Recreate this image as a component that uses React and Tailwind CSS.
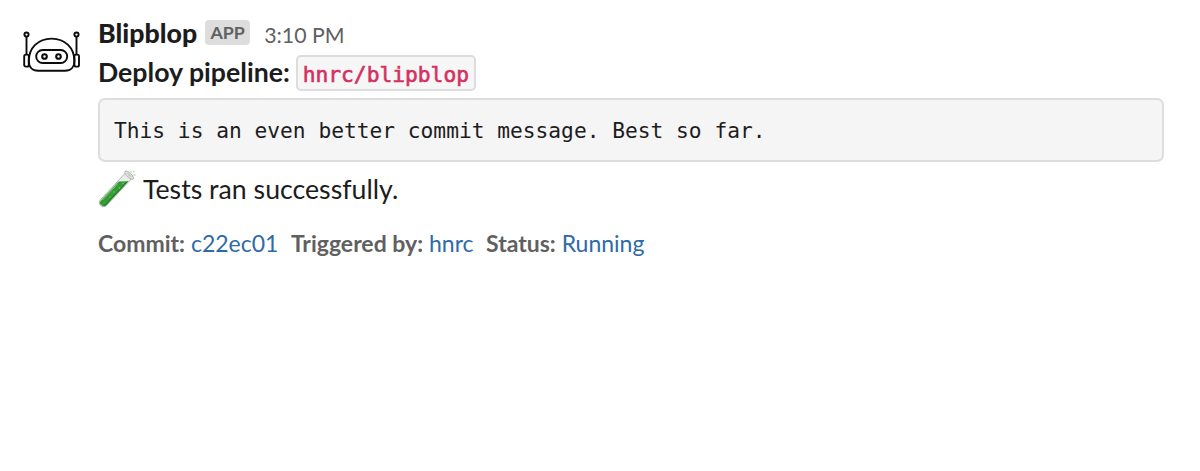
function RobotAvatar() {
  return (
    <svg className="h-16 w-16 shrink-0" viewBox="0 0 64 64" fill="none" stroke="#0c0c0c" strokeWidth="1.9">
      <circle cx="6.5" cy="14.6" r="2.1" />
      <circle cx="56.5" cy="14.6" r="2.1" />
      <path d="M6.5 16.7V34M56.5 16.7V34" />
      <rect x="4.2" y="34.6" width="4.6" height="12" rx="1.7" />
      <rect x="54.4" y="34.6" width="4.6" height="12" rx="1.7" />
      <path d="M8.8 41C8.8 28 18 18.6 31.6 18.6S54.4 28 54.4 41C54.4 47 51 50.7 45 50.7H18.2C12.2 50.7 8.8 47 8.8 41Z" />
      <rect x="16.2" y="30" width="31" height="13" rx="6.5" />
      <circle cx="24.5" cy="36.5" r="2.3" strokeWidth="2.1" />
      <circle cx="38.5" cy="36.5" r="2.3" strokeWidth="2.1" />
    </svg>
  );
}

function TestTube() {
  return (
    <svg className="h-[39px] w-[39px] shrink-0" viewBox="0 0 39 39">
      <defs>
        <linearGradient id="liquid" x1="0" x2="1">
          <stop offset="0" stopColor="#86c77e" />
          <stop offset="0.2" stopColor="#2f9631" />
          <stop offset="0.7" stopColor="#38a035" />
          <stop offset="1" stopColor="#176b22" />
        </linearGradient>
      </defs>
      <g transform="translate(31 5) rotate(43)">
        <path d="M-4 0V37.5A4.2 4.2 0 0 0 4.4 37.5V0Z" fill="#e9eeea" stroke="#91a596" strokeWidth="0.7" />
        <path d="M-3.5 12L3.9 5V37.3A3.7 3.7 0 0 1 -3.5 37.3Z" fill="url(#liquid)" />
        <path d="M-2.1 14V36" stroke="#a5dd99" strokeWidth="0.7" opacity="0.7" />
        <ellipse cx="0.2" cy="0" rx="5.6" ry="2.2" fill="#e3e6e4" stroke="#a2aaa5" strokeWidth="0.8" />
        <ellipse cx="0.2" cy="-0.2" rx="3.2" ry="0.9" fill="#c1cbc4" />
      </g>
      <g fill="#82cf7c">
        <circle cx="21.5" cy="18" r="0.8" />
        <circle cx="16" cy="22" r="0.7" />
        <circle cx="25" cy="13.5" r="0.7" />
        <circle cx="12" cy="27" r="0.6" />
      </g>
      <g fill="#b7e6b6">
        <circle cx="33" cy="1.8" r="1" />
        <circle cx="36" cy="1.4" r="0.9" />
        <circle cx="36.5" cy="5" r="1.1" />
      </g>
    </svg>
  );
}

function Field({ label, value }) {
  return (
    <span className="whitespace-pre">
      <b>{label}</b> <a className="text-[#2f6aa8]">{value}</a>
    </span>
  );
}

export default function App() {
  return (
    <main className="flex h-[471px] w-[1200px] bg-white pl-5 pt-[14px] font-['Lato',sans-serif] text-[26.7px] leading-[39px] text-[#1d1c1d]">
      <div className="mt-[6px]">
        <RobotAvatar />
      </div>
      <div className="ml-[14px] w-[1066px]">
        <div className="flex h-[39px] items-baseline">
          <span className="font-black">Blipblop</span>
          <span className="ml-2 flex h-[25px] w-[45px] -translate-y-1 items-center justify-center rounded-[4px] bg-[#dddddd] text-[17.8px] font-bold leading-[25px] text-[#616061]">
            APP
          </span>
          <span className="ml-[14px] text-[21.3px] text-[#616061]">3:10 PM</span>
        </div>
        <div className="flex h-[39px] whitespace-nowrap">
          <b>Deploy pipeline:</b>
          <code className="ml-[6px] mt-0.5 flex h-[36px] w-[180px] items-center justify-center rounded-[5px] border-2 border-[#dddddd] bg-[#f6f6f6] pt-[3px] font-['DejaVu_Sans_Mono',monospace] text-[21.25px] leading-[32px] text-[#d4315f] [-webkit-text-stroke:0.6px_#d4315f]">
            hnrc/blipblop
          </code>
        </div>
        <pre className="mt-[6px] flex h-[64px] items-center rounded-[7px] border-2 border-[#dddddd] bg-[#f5f5f5] pl-[14px] font-['DejaVu_Sans_Mono',monospace] text-[21.23px]">This is an even better commit message. Best so far.</pre>
        <div className="mt-[8px] flex h-[39px] items-center">
          <TestTube />
          <span className="ml-[6px]">Tests ran successfully.</span>
        </div>
        <div className="mt-[15px] flex gap-[12.5px] text-[23px] text-[#616061]">
          <Field label="Commit:" value="c22ec01" />
          <Field label="Triggered by:" value="hnrc" />
          <Field label="Status:" value="Running" />
        </div>
      </div>
    </main>
  );
}
